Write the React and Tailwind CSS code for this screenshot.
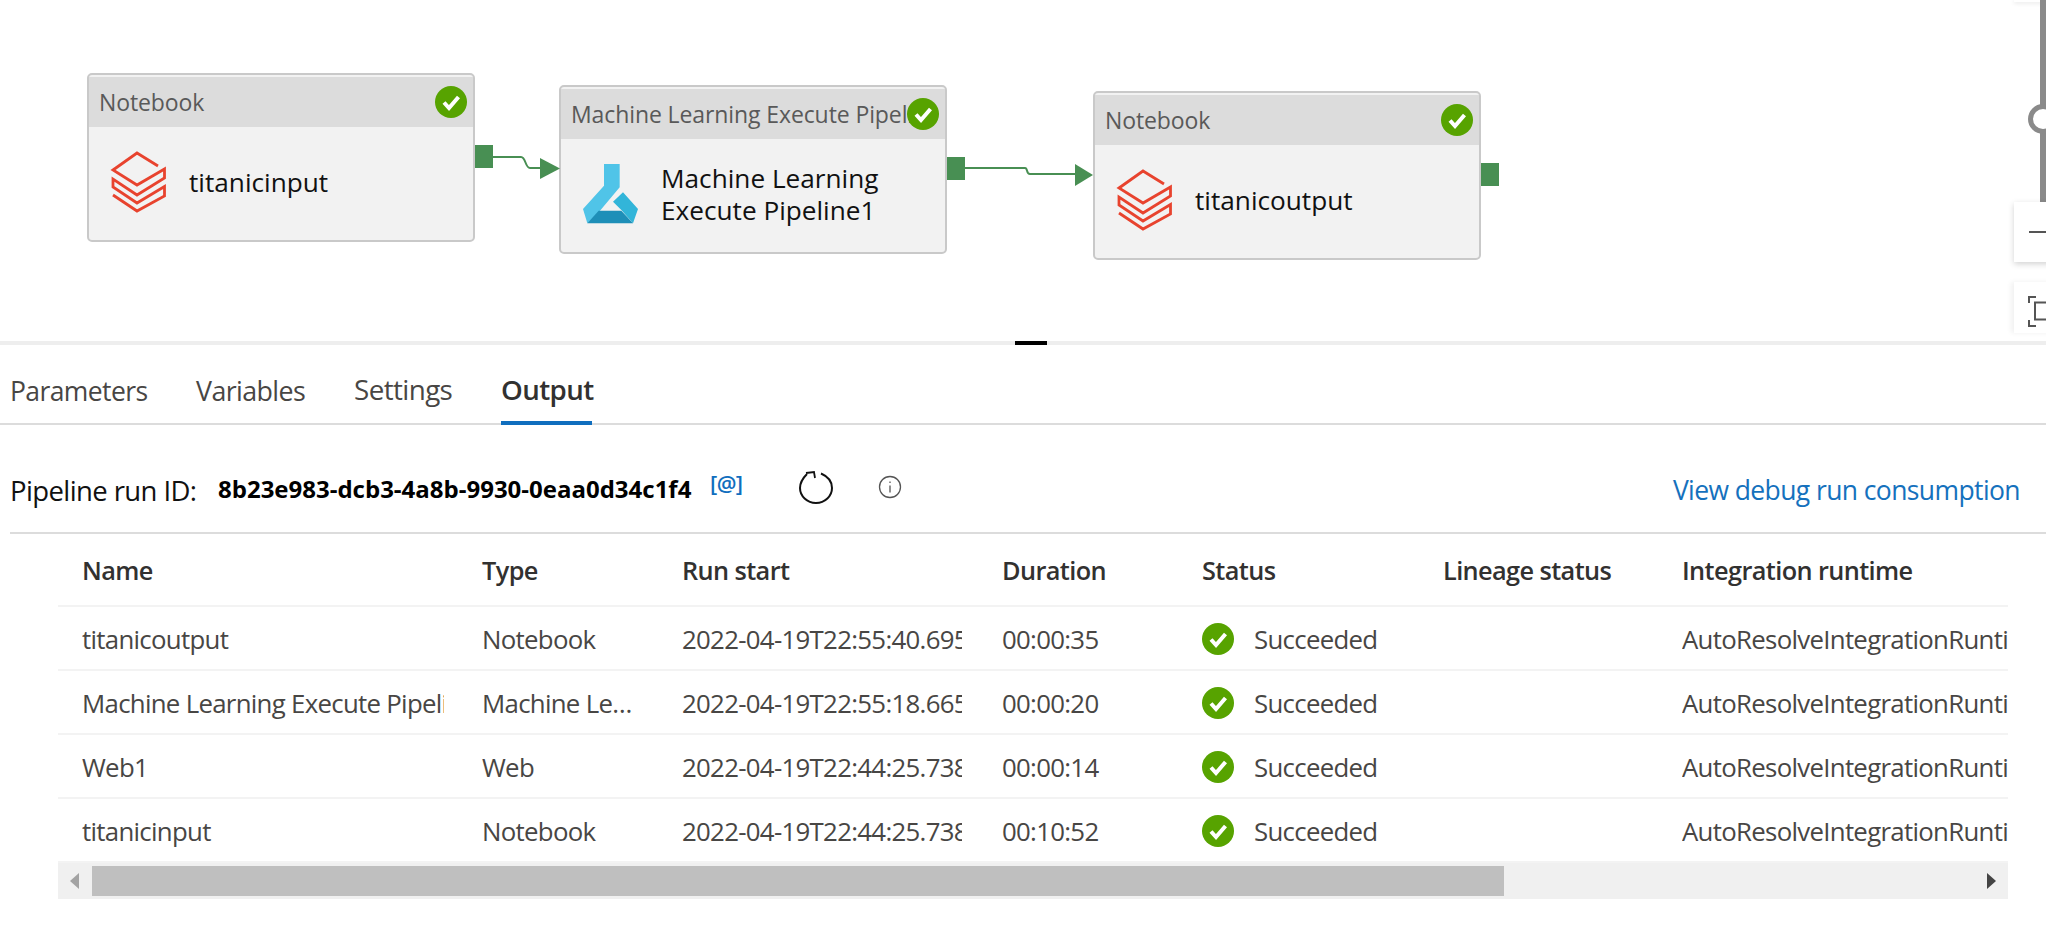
import React from "react";

const rows = [
  { name: "titanicoutput", type: "Notebook", start: "2022-04-19T22:55:40.695", duration: "00:00:35" },
  { name: "Machine Learning Execute Pipeline1", type: "Machine Learning Execute Pipeline", start: "2022-04-19T22:55:18.665", duration: "00:00:20" },
  { name: "Web1", type: "Web", start: "2022-04-19T22:44:25.738", duration: "00:00:14" },
  { name: "titanicinput", type: "Notebook", start: "2022-04-19T22:44:25.738", duration: "00:10:52" },
];

const headers = ["Name", "Type", "Run start", "Duration", "Status", "Lineage status", "Integration runtime"];

const CheckBadge = ({ className }) => (
  <svg viewBox="0 0 32 32" className={className}>
    <circle cx="16" cy="16" r="16" fill="#57a300" />
    <path d="M9 16.5l5 5.5 9.5-11" fill="none" stroke="#fff" strokeWidth="4" />
  </svg>
);

const DatabricksIcon = () => (
  <svg viewBox="0 0 66 70" className="w-[66px] h-[70px] mt-[2px]" fill="none" stroke="#e8432e" strokeWidth="2.8">
    <path d="M54 18L33 5 9 22l24 15 27.500-16v9L33 47 9 31v8l24 16 27.500-16.500V48L33 63 9 47" />
  </svg>
);

const FlaskIcon = () => (
  <svg viewBox="-6 0 198 210" className="w-[66px] h-[70px]">
    <path d="M78 15h47v70L66 155l-38 38-13-43 63-70z" fill="#50c4e8" />
    <path d="M135 100l45 50-15 43-35-40-25-25z" fill="#32b5d9" />
    <path d="M62 155h68l35 38H28z" fill="#1e8fb8" />
  </svg>
);

const Node = ({ pos, title, icon, children }) => (
  <div className={`absolute w-[388px] h-[169px] border-2 border-[#c9c9c9] rounded-[5px] bg-[#f2f2f2] pt-[2px] ${pos}`}>
    <div className="h-[50px] bg-[#dcdcdc] flex items-center pl-[10px] pr-[6px] relative">
      <span className="text-[23px] tracking-[-0.1px] text-[#595959] whitespace-nowrap overflow-hidden w-[345px]">{title}</span>
      <CheckBadge className="absolute right-[6px] top-[9px] w-[32px] h-[32px]" />
    </div>
    <div className="flex items-center h-[110px] pl-[15px]">
      {icon}
      <div className="ml-[19px] text-[26.2px] leading-[32px] text-[#111]">{children}</div>
    </div>
  </div>
);

const Port = ({ pos }) => <div className={`absolute w-[18px] h-[23px] bg-[#488f53] ${pos}`} />;

const App = () => {
  return (
    <div className="w-[2046px] h-[946px] bg-white overflow-hidden font-['Open_Sans',sans-serif]">
      {/* pipeline canvas */}
      <div className="relative h-[341px]">
        <Node pos="left-[87px] top-[73px]" title="Notebook" icon={<DatabricksIcon />}>titanicinput</Node>
        <Port pos="left-[475px] top-[145px]" />
        <Node pos="left-[559px] top-[85px]" title="Machine Learning Execute Pipeline1" icon={<FlaskIcon />}>
          Machine Learning
          <br />
          Execute Pipeline1
        </Node>
        <Port pos="left-[947px] top-[157px]" />
        <Node pos="left-[1093px] top-[91px]" title="Notebook" icon={<DatabricksIcon />}>titanicoutput</Node>
        <Port pos="left-[1481px] top-[163px]" />

        <svg className="absolute left-0 top-0 w-[1200px] h-[341px]" viewBox="0 0 1200 341" fill="none">
          <path d="M493 157h28c5 0 4 11 9 11h12" stroke="#488f53" strokeWidth="2" />
          <path d="M540 158l20 10.500-20 10.500z" fill="#488f53" />
          <path d="M965 168h60c3 0 1 6 5 6h47" stroke="#488f53" strokeWidth="2" />
          <path d="M1075 164l18 11-18 11z" fill="#488f53" />
        </svg>

        {/* zoom control */}
        <div className="absolute left-[2014px] top-0 w-[40px] h-[2px] bg-white shadow-[0_1px_4px_rgba(0,0,0,0.15)]" />
        <div className="absolute left-[2040px] top-0 w-[6px] h-[202px] bg-[#8a8a8a]" />
        <div className="absolute left-[2028px] top-[104px] w-[30px] h-[30px] rounded-full border-[5px] border-[#8a8a8a] bg-white" />
        <div className="absolute left-[2014px] top-[202px] w-[40px] h-[60px] bg-white shadow-[0_2px_6px_rgba(0,0,0,0.18)] flex items-center pl-[15px]">
          <div className="w-[25px] h-[2px] bg-[#555]" />
        </div>
        <div className="absolute left-[2014px] top-[282px] w-[40px] h-[51px] bg-white shadow-[-3px_0_5px_rgba(0,0,0,0.06)]">
          <svg viewBox="0 0 32 51" className="absolute left-0 top-0 w-[32px] h-[51px]" fill="none" stroke="#555">
            <path d="M22 15h-7v6M15 38v6h7" strokeWidth="2" />
            <path d="M21 20.500h12v17H21z" strokeWidth="2" />
          </svg>
        </div>
      </div>

      {/* splitter */}
      <div className="h-[4px] bg-[#eeeeee] flex justify-center pl-[16px]">
        <div className="w-[32px] h-[4px] bg-black" />
      </div>

      {/* tabs */}
      <div className="h-[80px] border-b-2 border-[#dcdcdc] flex items-end pl-[10px] tracking-[-0.6px] whitespace-nowrap">
        <div className="flex mb-[-2px] text-[#484644] leading-[40px]">
          <div className="h-[54px] w-[186px] text-[26.5px]">Parameters</div>
          <div className="h-[54px] w-[158px] text-[26.8px]">Variables</div>
          <div className="h-[54px] w-[147px] text-[27.8px] -mt-[2px]">Settings</div>
          <div className="h-[54px] w-[91px] text-[27.7px] font-semibold text-[#323130] border-b-4 border-[#106ebe]"><div className="-mt-[2px]">Output</div></div>
        </div>
      </div>

      {/* run id row */}
      <div className="ml-[10px] h-[109px] pt-[24px] border-b-2 border-[#dcdcdc] flex items-center">
        <span className="text-[27.5px] tracking-[-0.6px] text-[#111] w-[208px] whitespace-nowrap">Pipeline run ID:</span>
        <span className="text-[24px] font-bold text-black w-[492px] -mt-[4px] whitespace-nowrap">8b23e983-dcb3-4a8b-9930-0eaa0d34c1f4</span>
        <span className="text-[22px] font-semibold text-[#106ebe] w-[89px] tracking-[-0.6px] -mt-[14px]">[@]</span>
        <svg viewBox="0 0 34 36" className="w-[34px] h-[36px] -mt-[6px]" fill="none" stroke="#111" strokeWidth="2">
          <path d="M22 3.500c7 3 11 8 11 14.500 0 8-7 15-16 15S1 26 1 18C1 13 3 9 8 4" />
          <path d="M7 3l8-1 1 6" strokeWidth="1.800" />
        </svg>
        <svg viewBox="0 0 24 24" className="ml-[45px] w-[24px] h-[24px] -mt-[8px]" fill="none" stroke="#555" strokeWidth="1.3">
          <circle cx="12" cy="12" r="10.500" />
          <path d="M12 10.500v7M12 6.500v1.500" />
        </svg>
        <a className="ml-auto mr-[26px] text-[26.5px] tracking-[-0.6px] text-[#1571bd]">View debug run consumption</a>
      </div>

      {/* activity table */}
      <div className="ml-[58px] w-[1950px]">
        <div className="grid grid-cols-[400px_200px_320px_200px_241px_239px_350px] h-[73px] pt-[2px] border-b-2 border-[#f3f3f3] items-center text-[25.3px] font-semibold text-[#323130] tracking-[-0.6px]">
          {headers.map((h) => (
            <div key={h} className="pl-[24px] whitespace-nowrap">{h}</div>
          ))}
        </div>
        {rows.map((r, i) => (
          <div
            key={i}
            className="grid grid-cols-[400px_200px_320px_200px_241px_239px_350px] h-[64px] last:h-[63px] pt-[3px] border-b-2 border-[#f3f3f3] last:border-b-0 items-center text-[25.8px] text-[#484644] tracking-[-0.7px]"
          >
            <div className="ml-[24px] mr-[14px] overflow-hidden whitespace-nowrap">{r.name}</div>
            <div className="ml-[24px] mr-[14px] overflow-hidden whitespace-nowrap text-ellipsis">{r.type}</div>
            <div className="ml-[24px] mr-[16px] overflow-hidden whitespace-nowrap">{r.start}</div>
            <div className="ml-[24px] whitespace-nowrap">{r.duration}</div>
            <div className="ml-[24px] flex items-center whitespace-nowrap">
              <CheckBadge className="w-[32px] h-[32px] -mt-[2px]" />
              <span className="ml-[20px]">Succeeded</span>
            </div>
            <div />
            <div className="ml-[24px] overflow-hidden whitespace-nowrap">AutoResolveIntegrationRuntime</div>
          </div>
        ))}
        {/* scrollbar */}
        <div className="h-[36px] bg-[#f0f0f0] flex items-center relative">
          <div className="ml-[34px] w-[1412px] h-[30px] bg-[#bfbfbf]" />
          <div className="absolute left-[12px] top-[10px] border-y-[8px] border-y-transparent border-r-[9px] border-r-[#a3a3a3]" />
          <div className="absolute left-[1929px] top-[10px] border-y-[8px] border-y-transparent border-l-[9px] border-l-[#444]" />
        </div>
      </div>
    </div>
  );
};

export default App;
